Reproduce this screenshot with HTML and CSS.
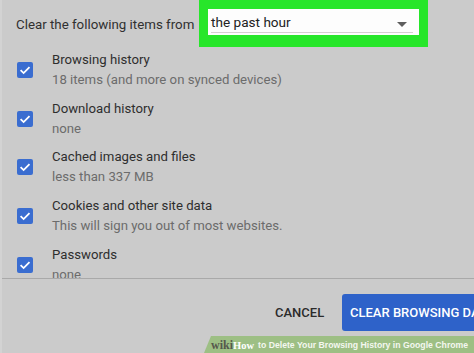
FILE: index.html
```html
<!DOCTYPE html>
<html>
<head>
<meta charset="utf-8">
<link rel="stylesheet" href="styles.css">
</head>
<body>
<div class="dialog">
  <div class="header">
    <span class="label">Clear the following items from</span>
    <div class="highlight">
      <div class="select">
        <span class="select-text">the past hour</span>
        <span class="arrow"></span>
      </div>
    </div>
  </div>
  <div class="list">
    <div class="item">
      <span class="check"><svg viewBox="0 0 16 16" width="16" height="16"><path d="M3.6 8.2 L6.6 11.1 L12.5 5.1" fill="none" stroke="#fff" stroke-width="1.8"/></svg></span>
      <div class="text"><div class="title">Browsing history</div><div class="sub">18 items (and more on synced devices)</div></div>
    </div>
    <div class="item">
      <span class="check"><svg viewBox="0 0 16 16" width="16" height="16"><path d="M3.6 8.2 L6.6 11.1 L12.5 5.1" fill="none" stroke="#fff" stroke-width="1.8"/></svg></span>
      <div class="text"><div class="title">Download history</div><div class="sub">none</div></div>
    </div>
    <div class="item">
      <span class="check"><svg viewBox="0 0 16 16" width="16" height="16"><path d="M3.6 8.2 L6.6 11.1 L12.5 5.1" fill="none" stroke="#fff" stroke-width="1.8"/></svg></span>
      <div class="text"><div class="title">Cached images and files</div><div class="sub">less than 337 MB</div></div>
    </div>
    <div class="item">
      <span class="check"><svg viewBox="0 0 16 16" width="16" height="16"><path d="M3.6 8.2 L6.6 11.1 L12.5 5.1" fill="none" stroke="#fff" stroke-width="1.8"/></svg></span>
      <div class="text"><div class="title">Cookies and other site data</div><div class="sub">This will sign you out of most websites.</div></div>
    </div>
    <div class="item">
      <span class="check"><svg viewBox="0 0 16 16" width="16" height="16"><path d="M3.6 8.2 L6.6 11.1 L12.5 5.1" fill="none" stroke="#fff" stroke-width="1.8"/></svg></span>
      <div class="text"><div class="title">Passwords</div><div class="sub">none</div></div>
    </div>
  </div>
  <div class="footer">
    <span class="cancel">CANCEL</span>
    <span class="primary">CLEAR BROWSING DATA</span>
  </div>
  <div class="watermark">
    <span class="wiki">wiki</span><span class="how">How</span><span class="wm-text">to Delete Your Browsing History in Google Chrome</span>
  </div>
</div>
</body>
</html>
```
FILE: styles.css
```css
html, body {
  margin: 0;
  padding: 0;
}
body {
  width: 474px;
  height: 353px;
  overflow: hidden;
  background: #cbcbcb;
  font-family: Roboto, "Liberation Sans", sans-serif;
}
.dialog {
  position: relative;
  width: 474px;
  height: 353px;
  overflow: hidden;
  background: #cbcbcb;
  border-left: 2px solid #d3d3d3;
  box-sizing: border-box;
}
.header {
  height: 45.6px;
  display: flex;
  align-items: flex-start;
}
.label {
  margin-left: 14px;
  margin-top: 16px;
  font-size: 13.3px;
  line-height: 17px;
  color: #303030;
  width: 183px;
  white-space: nowrap;
}
.highlight {
  position: relative;
  z-index: 2;
  width: 229px;
  height: 47px;
  box-sizing: border-box;
  padding: 9px 9px 12px 9px;
  background: #27e62a;
}
.select {
  height: 26px;
  background: #fdfdfd;
  display: flex;
  align-items: center;
  position: relative;
  padding-left: 3px;
}
.select::after {
  content: "";
  position: absolute;
  left: 3px;
  right: 6px;
  bottom: 2px;
  height: 1px;
  background: #d6cfd2;
}
.select-text {
  flex: 1;
  font-size: 13.6px;
  color: #222;
}
.arrow {
  width: 0;
  height: 0;
  border-left: 5px solid transparent;
  border-right: 5px solid transparent;
  border-top: 5px solid #5e5e5e;
  margin-right: 12px;
  margin-top: 4px;
}
.list {
  height: 232.4px;
  overflow: hidden;
  border-bottom: 1px solid #a9a9a9;
}
.item {
  height: 48.7px;
  display: flex;
  align-items: center;
}
.check {
  width: 16px;
  height: 16px;
  margin-left: 15px;
  border-radius: 2px;
  background: #3a6dd0;
  display: block;
  flex-shrink: 0;
}
.check svg {
  display: block;
}
.text {
  margin-left: 19px;
  font-size: 13.2px;
  line-height: 20px;
}
.title {
  color: #2e2e2e;
}
.sub {
  color: #6c6c6c;
}
.footer {
  display: flex;
  align-items: flex-start;
  padding-top: 15px;
}
.cancel {
  flex-shrink: 0;
  margin-left: 273px;
  width: 52px;
  height: 37px;
  line-height: 37px;
  font-size: 13px;
  font-weight: 500;
  color: #2b2b2b;
}
.primary {
  flex-shrink: 0;
  margin-left: 15px;
  height: 37px;
  line-height: 37px;
  padding-left: 8px;
  padding-right: 20px;
  border-radius: 3px;
  background: #2e62c9;
  color: #ffffff;
  font-size: 13px;
  font-weight: 500;
  white-space: nowrap;
}
.watermark {
  position: absolute;
  left: 202px;
  right: 0;
  bottom: 0;
  height: 17px;
  background: #9dbf84;
  clip-path: polygon(7px 0, 100% 0, 100% 100%, 0 100%);
  display: flex;
  align-items: center;
  padding-left: 7px;
  padding-top: 1px;
  box-sizing: border-box;
  white-space: nowrap;
}
.wiki {
  font-family: "Liberation Serif", serif;
  font-weight: bold;
  font-size: 12px;
  color: #55584c;
}
.how {
  font-family: "Liberation Serif", serif;
  font-weight: bold;
  font-size: 10.5px;
  color: #ffffff;
}
.wm-text {
  font-family: "Liberation Sans", sans-serif;
  font-weight: bold;
  font-size: 8.7px;
  color: #f4f7f0;
  margin-left: 4px;
}
```
